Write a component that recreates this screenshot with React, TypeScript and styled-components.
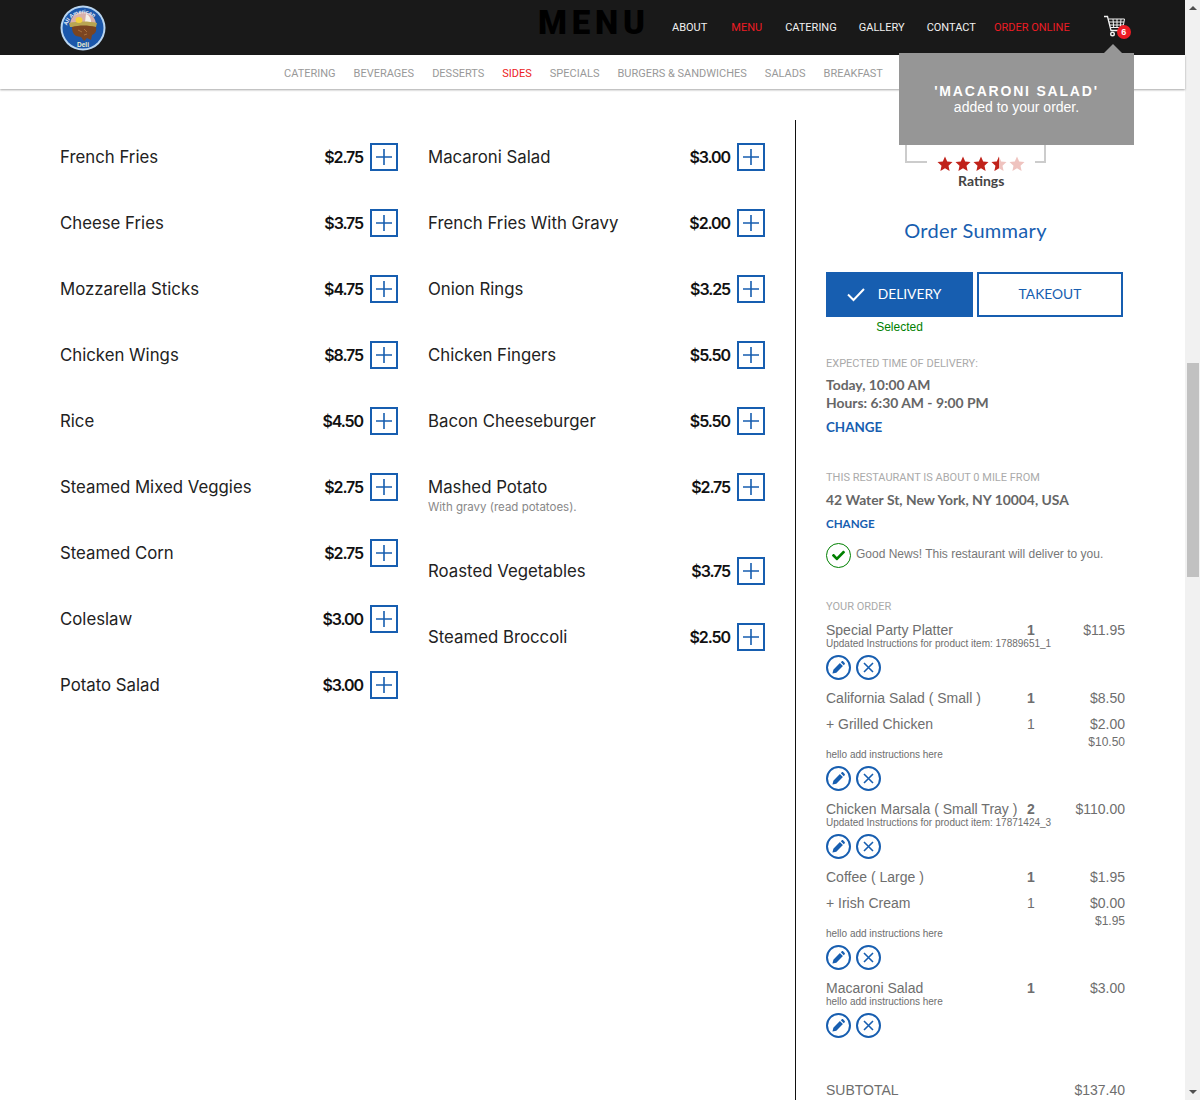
import React from 'react';
import styled, { createGlobalStyle } from 'styled-components';
import { FaCheck } from 'react-icons/fa';

const BLUE = '#175eb0';
const SANS = '"Lato", "Liberation Sans", sans-serif';
const CAPS = '"Roboto", "Liberation Sans", sans-serif';
const ARIAL = '"Liberation Sans", Arial, sans-serif';

const GlobalStyle = createGlobalStyle`
  html, body { margin: 0; padding: 0; height: 1100px; overflow: hidden; background: #fff; }
  * { box-sizing: border-box; }
`;

const Shell = styled.div`
  position: relative;
  display: flex;
  width: 1200px;
  height: 1100px;
  overflow: hidden;
`;

const Page = styled.div`
  width: 1185px;
  font-family: ${SANS};
`;

const Scrollbar = styled.div`
  width: 15px;
  background: #f1f1f1;
  display: flex;
  flex-direction: column;
  align-items: center;
  justify-content: space-between;
  padding: 6px 0;
`;

const ScrollTrack = styled.div`
  flex: 1;
  width: 100%;
  padding: 353px 1px 0 2px;
`;

const ScrollThumb = styled.div`
  height: 214px;
  background: #c1c1c1;
`;

const Arrow = styled.div<{ $down?: boolean }>`
  width: 0;
  height: 0;
  border-left: 4px solid transparent;
  border-right: 4px solid transparent;
  ${p => (p.$down ? 'border-top: 4px solid #505050;' : 'border-bottom: 4px solid #505050;')}
`;

const TopBar = styled.header`
  height: 55px;
  background: #191919;
  display: flex;
  align-items: center;
  padding-left: 60px;
`;

const Logo = styled.svg`
  width: 46px;
  height: 46px;
  flex: none;
`;

const PageTitle = styled.div`
  margin-left: 432px;
  width: 134px;
  font-family: "Roboto", sans-serif;
  font-weight: 900;
  font-size: 33px;
  letter-spacing: 4.8px;
  line-height: 46px;
  color: #000;
  margin-top: -9px;
`;

const TopNav = styled.nav`
  display: flex;
  align-items: center;
  font-family: ${CAPS};
  font-size: 11px;
  margin-top: -1px;
`;

const TopLink = styled.a<{ $red?: boolean; $left: number }>`
  position: relative;
  margin-left: ${p => p.$left}px;
  color: ${p => (p.$red ? '#ec1c24' : '#f0f0f0')};
  white-space: nowrap;
`;

const CartWrap = styled.div`
  position: relative;
  width: 30px;
  height: 26px;
  margin-left: 34px;
  margin-top: 2px;
`;

const CartBadge = styled.span`
  position: absolute;
  left: 13px;
  top: 10px;
  width: 14px;
  height: 14px;
  border-radius: 50%;
  background: #ec1c24;
  color: #fff;
  font: bold 9px/14px ${ARIAL};
  text-align: center;
`;

const SubBar = styled.nav`
  height: 34px;
  background: #fff;
  box-shadow: 0 1px 2px rgba(0, 0, 0, 0.35);
  display: flex;
  align-items: center;
  padding: 2px 0 0 284px;
  gap: 18px;
  font-family: ${CAPS};
  font-size: 11px;
  position: relative;
`;

const SubLink = styled.a<{ $active?: boolean }>`
  color: ${p => (p.$active ? '#ec1c24' : '#999')};
  white-space: nowrap;
`;

const Toast = styled.div`
  position: absolute;
  left: 899px;
  top: 53px;
  width: 235px;
  height: 92px;
  background: #969696;
  color: #fff;
  font-family: ${ARIAL};
  font-size: 14px;
  line-height: 16px;
  text-align: center;
  padding-top: 30px;

  &::before {
    content: '';
    position: absolute;
    left: 205px;
    top: -9px;
    border-left: 9px solid transparent;
    border-right: 9px solid transparent;
    border-bottom: 9px solid #969696;
  }
`;

const ToastName = styled.div`
  font-weight: bold;
  letter-spacing: 1.8px;
`;

const Content = styled.main`
  display: flex;
  padding: 31px 0 0 60px;
`;

const MenuColumn = styled.section<{ $width: number; $gap: number }>`
  width: ${p => p.$width}px;
  margin-right: ${p => p.$gap}px;
  padding-top: 23px;
`;

const MenuRow = styled.div<{ $tall?: boolean }>`
  display: flex;
  align-items: flex-start;
  height: ${p => (p.$tall ? 84 : 66)}px;
`;

const MenuText = styled.div`
  flex: 1;
`;

const MenuName = styled.div`
  font-family: "Inter", sans-serif;
  font-size: 16.8px;
  line-height: 28px;
  color: #222;
`;

const MenuNote = styled.div`
  font-family: "Inter", sans-serif;
  font-size: 11.5px;
  line-height: 12px;
  color: #888;
`;

const MenuPrice = styled.div`
  font-family: "Inter", sans-serif;
  font-weight: 600;
  font-size: 16px;
  letter-spacing: -1.1px;
  line-height: 28px;
  color: #111;
  margin-right: 7px;
`;

const AddButton = styled.button`
  width: 28px;
  height: 28px;
  padding: 0;
  border: 2px solid ${BLUE};
  background: #fff;
  display: flex;
  align-items: center;
  justify-content: center;
`;

const Sidebar = styled.aside`
  width: 390px;
  height: 1100px;
  border-left: 1px solid #111;
  padding-left: 30px;
  color: #666;
`;

const RatingFrame = styled.div`
  width: 141px;
  height: 43px;
  margin-left: 79px;
  border: 2px solid #ccc;
  border-top: 0;
`;

const StarRow = styled.div`
  display: flex;
  width: 108px;
  margin: -7px 0 0 101px;
  padding: 0 10px;
  gap: 2px;
  background: #fff;
  position: relative;
`;

const RatingLabel = styled.div`
  margin: 0 0 0 132px;
  font-size: 14px;
  font-weight: 700;
  line-height: 18px;
  color: #444;
`;

const SummaryTitle = styled.h2`
  width: 299px;
  margin: 27px 0 29px;
  font-weight: 400;
  font-size: 20px;
  line-height: 26px;
  letter-spacing: 0.3px;
  text-align: center;
  color: ${BLUE};
`;

const ModeRow = styled.div`
  display: flex;
  gap: 4px;
`;

const ModeButton = styled.button<{ $on?: boolean }>`
  width: ${p => (p.$on ? 147 : 146)}px;
  height: 45px;
  border: 2px solid ${BLUE};
  background: ${p => (p.$on ? BLUE : '#fff')};
  color: ${p => (p.$on ? '#fff' : BLUE)};
  font-family: ${SANS};
  font-size: 13.8px;
  display: flex;
  align-items: center;
  justify-content: center;
  gap: 12px;
  padding: 0 ${p => (p.$on ? 12 : 0)}px 2px 0;
`;

const SelectedNote = styled.div`
  width: 147px;
  margin-top: 3px;
  font-family: ${ARIAL};
  font-size: 12px;
  line-height: 14px;
  text-align: center;
  color: #008000;
`;

const Label = styled.div<{ $top: number }>`
  margin-top: ${p => p.$top}px;
  font-family: ${CAPS};
  font-size: 11px;
  line-height: 14px;
  color: #aaa;
`;

const InfoLine = styled.div<{ $top?: number }>`
  margin-top: ${p => p.$top ?? 0}px;
  font-size: 13.9px;
  font-weight: 700;
  line-height: 18px;
  color: #666;
`;

const ChangeLink = styled.a<{ $small?: boolean; $top: number }>`
  display: block;
  margin-top: ${p => p.$top}px;
  font-weight: 700;
  font-size: ${p => (p.$small ? 11.6 : 13.4)}px;
  line-height: 16px;
  color: ${BLUE};
`;

const GoodNews = styled.div`
  display: flex;
  align-items: flex-start;
  gap: 5px;
  margin-top: 11px;
  font-family: ${ARIAL};
  font-size: 12px;
  line-height: 22px;
  color: #777;
`;

const GoodIcon = styled.span`
  width: 25px;
  height: 25px;
  border: 1px solid #008000;
  border-radius: 50%;
  color: #008000;
  display: flex;
  align-items: center;
  justify-content: center;
  font-size: 13px;
  flex: none;
`;

const OrderList = styled.div`
  width: 299px;
  margin-top: 8px;
  font-family: ${ARIAL};
  color: #6e6e6e;
`;

const OrderLine = styled.div<{ $addon?: boolean }>`
  display: grid;
  grid-template-columns: 201px 30px 1fr;
  font-size: 14px;
  line-height: 16px;
  margin-top: ${p => (p.$addon ? 10 : 0)}px;
`;

const Qty = styled.span<{ $plain?: boolean }>`
  font-weight: ${p => (p.$plain ? 400 : 700)};
`;

const Price = styled.span`
  text-align: right;
`;

const ItemTotal = styled.div`
  margin-top: 3px;
  font-size: 12px;
  line-height: 14px;
  text-align: right;
`;

const Note = styled.div`
  font-size: 10px;
  line-height: 11px;
`;

const ItemActions = styled.div`
  display: flex;
  gap: 5px;
  margin: 6px 0 10px;
`;

const RoundButton = styled.button`
  width: 25px;
  height: 25px;
  padding: 0;
  border: 2px solid ${BLUE};
  border-radius: 50%;
  background: #fff;
  display: flex;
  align-items: center;
  justify-content: center;
`;

const SubtotalRow = styled.div`
  display: flex;
  justify-content: space-between;
  margin-top: 44px;
  font-size: 14px;
  line-height: 16px;
`;

const leftMenu: [string, string][] = [
  ['French Fries', '$2.75'],
  ['Cheese Fries', '$3.75'],
  ['Mozzarella Sticks', '$4.75'],
  ['Chicken Wings', '$8.75'],
  ['Rice', '$4.50'],
  ['Steamed Mixed Veggies', '$2.75'],
  ['Steamed Corn', '$2.75'],
  ['Coleslaw', '$3.00'],
  ['Potato Salad', '$3.00'],
];

const rightMenu: [string, string, string?][] = [
  ['Macaroni Salad', '$3.00'],
  ['French Fries With Gravy', '$2.00'],
  ['Onion Rings', '$3.25'],
  ['Chicken Fingers', '$5.50'],
  ['Bacon Cheeseburger', '$5.50'],
  ['Mashed Potato', '$2.75', 'With gravy (read potatoes).'],
  ['Roasted Vegetables', '$3.75'],
  ['Steamed Broccoli', '$2.50'],
];

const subLinks = ['CATERING', 'BEVERAGES', 'DESSERTS', 'SIDES', 'SPECIALS', 'BURGERS & SANDWICHES', 'SALADS', 'BREAKFAST'];

const PlusIcon = () => (
  <svg width="18" height="18" viewBox="0 0 18 18">
    <path d="M9 1v16M1 9h16" stroke={BLUE} strokeWidth="1.6" fill="none" />
  </svg>
);

const CloseIcon = () => (
  <svg width="11" height="11" viewBox="0 0 11 11">
    <path d="M1 1l9 9M10 1l-9 9" stroke={BLUE} strokeWidth="1.6" fill="none" />
  </svg>
);

const PencilIcon = () => (
  <svg width="15" height="15" viewBox="0 0 16 16" fill={BLUE}>
    <path d="M1.5 14.5l1-4.2 7-7 3.2 3.2-7 7z" />
    <path d="M10.5 2.4l1-1c.4-.4 1-.4 1.4 0l1.7 1.7c.4.4.4 1 0 1.4l-1 1z" />
  </svg>
);

const StarPath = 'M8 .6l2.2 4.9 5.3.6-4 3.6 1.1 5.3L8 12.3l-4.6 2.7 1.1-5.3-4-3.6 5.3-.6z';

const Star = ({ fill }: { fill: 'full' | 'half' | 'faint' }) => (
  <svg width="16" height="16" viewBox="0 0 16 16">
    <path d={StarPath} fill={fill === 'full' ? '#c0221a' : '#efc3bf'} />
    {fill === 'half' && (
      <path d="M8 .6v11.7l-4.6 2.7 1.1-5.3-4-3.6 5.3-.6z" fill="#c0221a" />
    )}
  </svg>
);

const CartIcon = () => (
  <svg width="24" height="24" viewBox="0 0 24 24" fill="none" stroke="#f2f2f2">
    <path d="M0 1.5h3.5l3.5 14h12" strokeWidth="1.3" />
    <path d="M4.5 4h16l-1.5 8.5H6.5M5 7h15M6 10h13.5M9 4l.7 8.5M13 4v8.5M17 4l-.7 8.5" strokeWidth="1" />
    <circle cx="8.5" cy="19" r="1.8" strokeWidth="1.4" />
    <circle cx="16.5" cy="19" r="1.8" strokeWidth="1.4" />
  </svg>
);

const LogoMark = () => (
  <Logo viewBox="0 0 46 46">
    <circle cx="23" cy="23" r="22.5" fill="#b9d5f0" />
    <circle cx="23" cy="23" r="20.5" fill="#1b57ab" />
    <path d="M10 20a13 13 0 0 1 26 0v2H10z" fill="#d8b0aa" />
    <path d="M26 9c3 1 5 4 5 8h-6z" fill="#f4f1ea" />
    <path d="M9 18c8-2 20-2 28 0l-1 4H10z" fill="#b9a552" />
    <ellipse cx="19" cy="15" rx="3.5" ry="3" fill="#f3d23c" />
    <path d="M12 22c7-2 16-2 24 0 1 4-1 7-4 8l-1 5-4-2-3 3-3-4-5-1c-3-2-4-5-4-9z" fill="#7b4521" />
    <path d="M18 25l4 2M24 24l3 3M27 29l-3 1" stroke="#a9703c" strokeWidth="1" fill="none" />
    <path id="logoArc" d="M6.5 25a16.5 16.5 0 0 1 33 0" fill="none" />
    <text fontSize="5.5" fontWeight="700" fill="#e8eef8" fontFamily={ARIAL}>
      <textPath href="#logoArc" startOffset="8%">All American</textPath>
    </text>
    <text x="23" y="42" fontSize="6.5" fontWeight="700" fill="#eef0d0" fontFamily={ARIAL} textAnchor="middle">Deli</text>
  </Logo>
);

const Actions = () => (
  <ItemActions>
    <RoundButton><PencilIcon /></RoundButton>
    <RoundButton><CloseIcon /></RoundButton>
  </ItemActions>
);

const MenuItem = ({ name, price, note }: { name: string; price: string; note?: string }) => (
  <MenuRow $tall={!!note}>
    <MenuText>
      <MenuName>{name}</MenuName>
      {note && <MenuNote>{note}</MenuNote>}
    </MenuText>
    <MenuPrice>{price}</MenuPrice>
    <AddButton><PlusIcon /></AddButton>
  </MenuRow>
);

export default function App() {
  return (
    <>
      <GlobalStyle />
      <Shell>
        <Page>
          <TopBar>
            <LogoMark />
            <PageTitle>MENU</PageTitle>
            <TopNav>
              <TopLink $left={0}>ABOUT</TopLink>
              <TopLink $left={24} $red>MENU</TopLink>
              <TopLink $left={23}>CATERING</TopLink>
              <TopLink $left={22}>GALLERY</TopLink>
              <TopLink $left={22}>CONTACT</TopLink>
              <TopLink $left={18} $red>ORDER ONLINE</TopLink>
              <CartWrap>
                <CartIcon />
                <CartBadge>6</CartBadge>
              </CartWrap>
            </TopNav>
          </TopBar>
          <SubBar>
            {subLinks.map(l => (
              <SubLink key={l} $active={l === 'SIDES'}>{l}</SubLink>
            ))}
          </SubBar>
          <Content>
            <MenuColumn $width={338} $gap={30}>
              {leftMenu.map(([n, p]) => <MenuItem key={n} name={n} price={p} />)}
            </MenuColumn>
            <MenuColumn $width={337} $gap={30}>
              {rightMenu.map(([n, p, t]) => <MenuItem key={n} name={n} price={p} note={t} />)}
            </MenuColumn>
            <Sidebar>
              <RatingFrame />
              <StarRow>
                <Star fill="full" />
                <Star fill="full" />
                <Star fill="full" />
                <Star fill="half" />
                <Star fill="faint" />
              </StarRow>
              <RatingLabel>Ratings</RatingLabel>
              <SummaryTitle>Order Summary</SummaryTitle>
              <ModeRow>
                <ModeButton $on>
                  <svg width="20" height="20" viewBox="0 0 20 20">
                    <path d="M2 10.5l5.5 5.5L18 5" stroke="#fff" strokeWidth="2" fill="none" />
                  </svg>
                  DELIVERY
                </ModeButton>
                <ModeButton>TAKEOUT</ModeButton>
              </ModeRow>
              <SelectedNote>Selected</SelectedNote>
              <Label $top={23}>EXPECTED TIME OF DELIVERY:</Label>
              <InfoLine $top={5}>Today, 10:00 AM</InfoLine>
              <InfoLine>Hours: 6:30 AM - 9:00 PM</InfoLine>
              <ChangeLink $top={7}>CHANGE</ChangeLink>
              <Label $top={36}>THIS RESTAURANT IS ABOUT 0 MILE FROM</Label>
              <InfoLine $top={6}>42 Water St, New York, NY 10004, USA</InfoLine>
              <ChangeLink $small $top={7}>CHANGE</ChangeLink>
              <GoodNews>
                <GoodIcon><FaCheck /></GoodIcon>
                Good News! This restaurant will deliver to you.
              </GoodNews>
              <Label $top={32}>YOUR ORDER</Label>
              <OrderList>
                <OrderLine><span>Special Party Platter</span><Qty>1</Qty><Price>$11.95</Price></OrderLine>
                <Note>Updated Instructions for product item: 17889651_1</Note>
                <Actions />
                <OrderLine><span>California Salad ( Small )</span><Qty>1</Qty><Price>$8.50</Price></OrderLine>
                <OrderLine $addon><span>+ Grilled Chicken</span><Qty $plain>1</Qty><Price>$2.00</Price></OrderLine>
                <ItemTotal>$10.50</ItemTotal>
                <Note>hello add instructions here</Note>
                <Actions />
                <OrderLine><span>Chicken Marsala ( Small Tray )</span><Qty>2</Qty><Price>$110.00</Price></OrderLine>
                <Note>Updated Instructions for product item: 17871424_3</Note>
                <Actions />
                <OrderLine><span>Coffee ( Large )</span><Qty>1</Qty><Price>$1.95</Price></OrderLine>
                <OrderLine $addon><span>+ Irish Cream</span><Qty $plain>1</Qty><Price>$0.00</Price></OrderLine>
                <ItemTotal>$1.95</ItemTotal>
                <Note>hello add instructions here</Note>
                <Actions />
                <OrderLine><span>Macaroni Salad</span><Qty>1</Qty><Price>$3.00</Price></OrderLine>
                <Note>hello add instructions here</Note>
                <Actions />
                <SubtotalRow><span>SUBTOTAL</span><span>$137.40</span></SubtotalRow>
              </OrderList>
            </Sidebar>
          </Content>
        </Page>
        <Scrollbar>
          <Arrow />
          <ScrollTrack><ScrollThumb /></ScrollTrack>
          <Arrow $down />
        </Scrollbar>
        <Toast>
          <ToastName>'MACARONI SALAD'</ToastName>
          added to your order.
        </Toast>
      </Shell>
    </>
  );
}
